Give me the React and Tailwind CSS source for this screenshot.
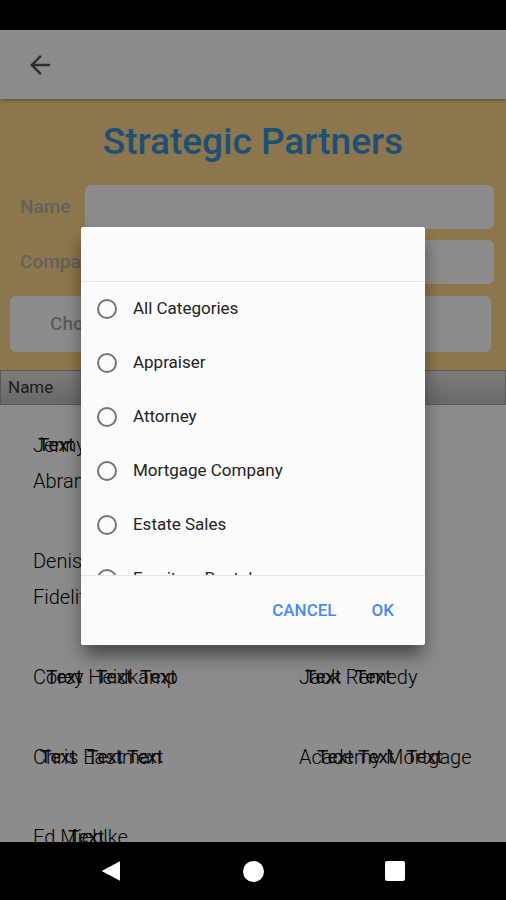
import React, { useState } from "react";
import { MdArrowBack } from "react-icons/md";

const CATEGORIES = [
  "All Categories",
  "Appraiser",
  "Attorney",
  "Mortgage Company",
  "Estate Sales",
  "Furniture Rental",
];

// tags are the placeholder labels that float over a cell's text
const PARTNERS = [
  { name: ["Jenny", "Abrams"], nameTags: ["left-[5px]"], company: [], companyTags: [] },
  { name: ["Denise", "Fidelity"], nameTags: [], company: [], companyTags: [] },
  {
    name: ["Corey Heidkamp"],
    nameTags: ["left-[13px]", "left-[63px]", "left-[107px]"],
    company: ["Jack Remedy"],
    companyTags: ["left-[6px]", "left-[56px]"],
  },
  {
    name: ["Chris Eastman"],
    nameTags: ["left-[7px]", "left-[54px]", "left-[94px]"],
    company: ["Academy Mortgage"],
    companyTags: ["left-[18px]", "left-[59px]", "left-[107px]"],
  },
  { name: ["Ed Miehlke"], nameTags: ["left-[35px]"], company: [], companyTags: [] },
];

function PartnerCell({ lines, tags }) {
  return (
    <div className="relative">
      {lines.map((line) => (
        <div key={line} className="whitespace-nowrap">{line}</div>
      ))}
      {tags.map((pos) => (
        <span key={pos} className={`absolute top-0 text-[19px] font-normal text-[#111] ${pos}`}>
          Text
        </span>
      ))}
    </div>
  );
}

function Field({ id, label }) {
  return (
    <div className="flex h-11 items-center">
      <label htmlFor={id} className="w-[65px] shrink-0 text-[19px] font-medium text-[#b8b0a8]">
        {label}
      </label>
      <input id={id} type="text" className="h-full min-w-0 flex-1 rounded-md bg-white outline-none" />
    </div>
  );
}

function CategoryDialog({ value, onChange }) {
  return (
    <div
      role="dialog"
      aria-label="Category"
      className="w-[68%] rounded-xs bg-[#fcfcfc] shadow-[0_12px_18px_-2px_rgba(0,0,0,0.5)]"
    >
      <div className="h-[54px]" />
      <div className="h-[295px] overflow-y-auto border-y border-[#e6e6e6] [scrollbar-width:none]">
        {CATEGORIES.map((category) => (
          <label key={category} className="flex h-[54px] items-center gap-4 pl-4 text-[17px] text-[#222]">
            <input
              type="radio"
              name="category"
              checked={value === category}
              onChange={() => onChange(category)}
              className="size-5 shrink-0 appearance-none rounded-full border-2 border-[#737373] checked:border-[6px] checked:border-[#488aff]"
            />
            {category}
          </label>
        ))}
      </div>
      <div className="flex h-[69px] items-center justify-end gap-[35px] pr-[31px] text-[17px] font-medium text-[#488aee]">
        <button type="button">CANCEL</button>
        <button type="button">OK</button>
      </div>
    </div>
  );
}

export default function App() {
  const [category, setCategory] = useState(null);

  return (
    <div className="flex h-screen flex-col bg-black font-[Roboto,sans-serif]">
      {/* Status bar */}
      <div className="h-[30px] shrink-0" />

      <main className="relative flex min-h-0 flex-1 flex-col overflow-hidden bg-white">
        {/* Toolbar */}
        <header className="z-10 flex h-[69px] shrink-0 items-center px-[25px] shadow-[0_1px_4px_rgba(0,0,0,0.4)]">
          <button type="button" aria-label="Back" className="text-[#555]">
            <MdArrowBack className="size-[30px]" />
          </button>
        </header>

        {/* Search form */}
        <section className="shrink-0 bg-[#ffd78c] pt-5 pb-[18px]">
          <h1 className="text-center text-[37px] leading-[46px] font-medium text-[#3892d8]">
            Strategic Partners
          </h1>
          <div className="mt-5 flex flex-col gap-[11px] pr-3 pl-5">
            <Field id="name" label="Name" />
            <Field id="company" label="Company" />
          </div>
          <div className="mt-3 pr-[15px] pl-[10px]">
            <button
              type="button"
              className="h-14 w-full rounded-md bg-white pl-10 text-left text-[19px] font-medium text-[#a8a8a8]"
            >
              Choose Category
            </button>
          </div>
        </section>

        {/* Results */}
        <div className="flex h-[35px] shrink-0 items-center border border-[#a0a0a0] bg-linear-to-b from-[#e2e2e2] to-[#bfbfbf] px-[7px] text-[17px] text-[#333]">
          Name
        </div>
        <div className="text-[20px] leading-9 font-light text-black">
          {PARTNERS.map((partner) => (
            <div key={partner.name[0]} className="grid grid-cols-[266px_1fr] py-[22px] pl-[33px]">
              <PartnerCell lines={partner.name} tags={partner.nameTags} />
              <PartnerCell lines={partner.company} tags={partner.companyTags} />
            </div>
          ))}
        </div>

        {/* Backdrop */}
        <div className="absolute inset-0 z-20 flex items-center justify-center bg-black/45">
          <CategoryDialog value={category} onChange={setCategory} />
        </div>
      </main>

      {/* Android navigation bar */}
      <nav className="grid h-[58px] shrink-0 grid-cols-3 items-center justify-items-center px-10 text-white">
        <button type="button" aria-label="Back">
          <svg viewBox="0 0 20 22" className="h-[22px] w-5" fill="currentColor">
            <path d="M19 1.2v19.6L1.6 11.6q-1-.6 0-1.2z" />
          </svg>
        </button>
        <button type="button" aria-label="Home" className="size-[21px] rounded-full bg-white" />
        <button type="button" aria-label="Recent apps" className="size-5 rounded-xs bg-white" />
      </nav>
    </div>
  );
}
